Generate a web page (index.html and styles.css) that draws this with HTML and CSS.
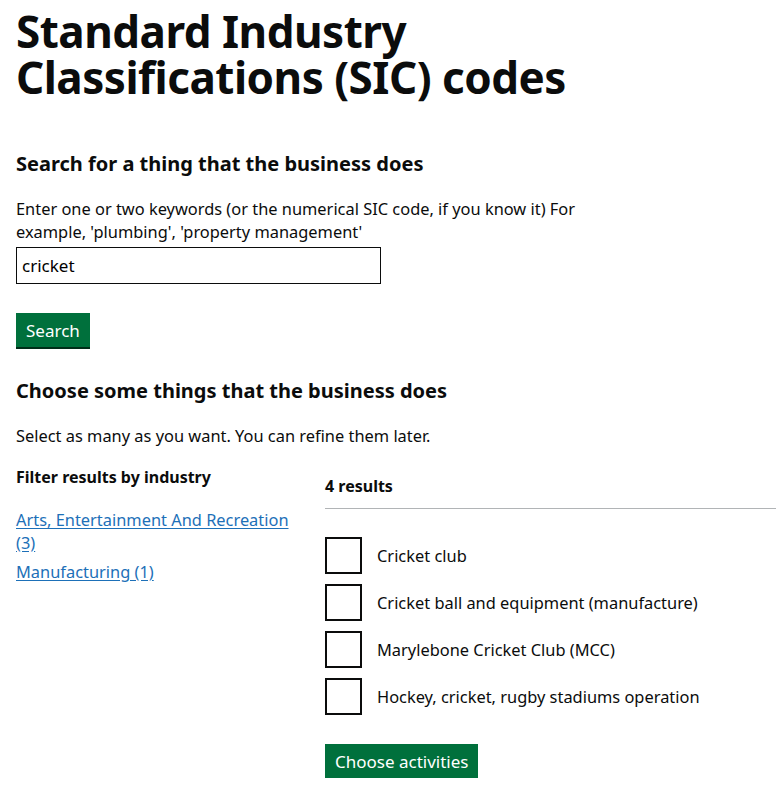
FILE: index.html
```html
<!DOCTYPE html>
<html lang="en">
<head>
  <meta charset="UTF-8" />
  <meta name="viewport" content="width=device-width, initial-scale=1" />
  <title>Standard Industry Classifications (SIC) codes</title>
  <link rel="stylesheet" href="styles.css">
</head>
<body>
  <main class="page">

    <h1 class="big-title">Standard Industry Classifications (SIC) codes</h1>

    <!-- Search -->
    <form class="search-form">
      <h2 class="section-title">Search for a thing that the business does</h2>
      <p class="hint">Enter one or two keywords (or the numerical SIC code, if you know it) For example, 'plumbing', 'property management'</p>
      <input class="text-input" type="text" value="cricket" />
      <button class="green-button" type="button">Search</button>
    </form>

    <!-- Results -->
    <h2 class="section-title">Choose some things that the business does</h2>
    <p class="body-text">Select as many as you want. You can refine them later.</p>

    <div class="results-layout">
      <div class="filters">
        <h3 class="small-title">Filter results by industry</h3>
        <ul class="filter-list">
          <li><a href="#">Arts, Entertainment And Recreation (3)</a></li>
          <li><a href="#">Manufacturing (1)</a></li>
        </ul>
      </div>

      <div class="results">
        <h3 class="results-count">4 results</h3>
        <div class="checkboxes">
          <label class="checkbox"><input type="checkbox" /><span class="box"></span>Cricket club</label>
          <label class="checkbox"><input type="checkbox" /><span class="box"></span>Cricket ball and equipment (manufacture)</label>
          <label class="checkbox"><input type="checkbox" /><span class="box"></span>Marylebone Cricket Club (MCC)</label>
          <label class="checkbox"><input type="checkbox" /><span class="box"></span>Hockey, cricket, rugby stadiums operation</label>
        </div>
        <button class="green-button" type="button">Choose activities</button>
      </div>
    </div>

  </main>
</body>
</html>
```

FILE: styles.css
```css
* { margin: 0; padding: 0; box-sizing: border-box; }

body {
  font-family: "Noto Sans", Arial, sans-serif;
  color: #0b0c0c;
  background: #ffffff;
}

.page {
  padding: 8px 0 0 16px;
}

.big-title {
  max-width: 600px;
  font-size: 44px;
  line-height: 46px;
  font-weight: 700;
  letter-spacing: -0.5px;
  margin-bottom: 50px;
}

.section-title {
  font-size: 20px;
  line-height: 28px;
  font-weight: 700;
  margin-bottom: 19px;
}

.hint,
.body-text {
  font-size: 16.4px;
  line-height: 23px;
}

.hint {
  max-width: 600px;
  margin-top: 2px;
  margin-bottom: 4px;
}

.text-input {
  display: block;
  width: 365px;
  height: 37px;
  border: 1px solid #0b0c0c;
  padding: 0 5px;
  font: inherit;
  font-size: 17px;
  margin-bottom: 29px;
}

.green-button {
  display: block;
  background: #00703c;
  color: #ffffff;
  border: none;
  box-shadow: 0 2px 0 #002d18;
  font: inherit;
  font-size: 17px;
  line-height: 22px;
  padding: 7px 10px 5px;
  cursor: pointer;
}

.search-form {
  margin-bottom: 30px;
}

.body-text {
  margin-bottom: 19px;
}

.results-layout {
  display: grid;
  grid-template-columns: 285px 1fr;
  column-gap: 24px;
}

.small-title {
  font-size: 16px;
  line-height: 23px;
  font-weight: 700;
  margin-bottom: 19px;
}

.filter-list {
  list-style: none;
  font-size: 16.4px;
  line-height: 23px;
}

.filter-list li {
  margin-bottom: 6px;
}

.filter-list a {
  color: #1d70b8;
  text-decoration: underline;
  text-underline-offset: 2px;
}

.results {
  padding-top: 9px;
}

.results-count {
  font-size: 16px;
  line-height: 23px;
  font-weight: 700;
  padding-bottom: 10px;
  border-bottom: 1px solid #b1b4b6;
  margin-bottom: 28px;
}

.checkboxes {
  display: flex;
  flex-direction: column;
  gap: 10px;
  margin-bottom: 29px;
}

.checkbox {
  display: flex;
  align-items: center;
  gap: 15px;
  font-size: 16.4px;
  cursor: pointer;
}

.checkbox input {
  display: none;
}

.box {
  width: 37px;
  height: 37px;
  border: 2px solid #0b0c0c;
}
```
